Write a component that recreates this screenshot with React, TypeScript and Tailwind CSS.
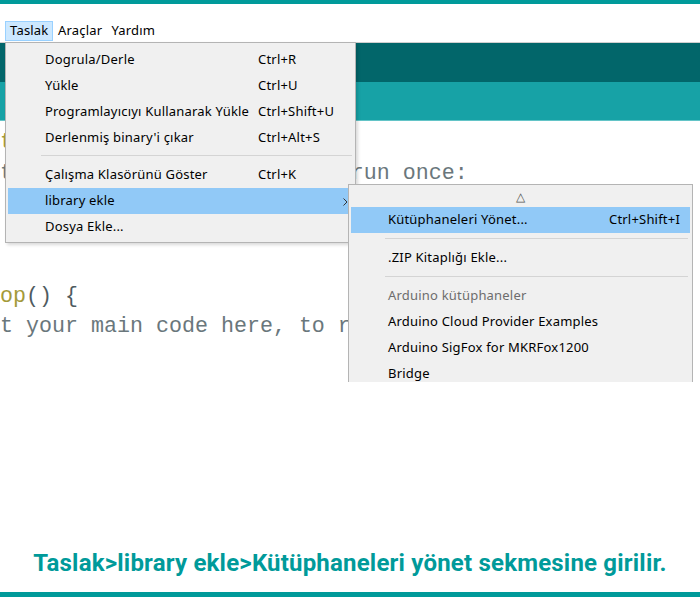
import React from 'react';

const uiFont = { fontFamily: '"Noto Sans", "Open Sans", sans-serif' };
const codeFont = { fontFamily: '"Liberation Mono", "Courier New", monospace' };

type Item =
  | { kind: 'item'; label: string; shortcut?: string; active?: boolean; submenu?: boolean; muted?: boolean }
  | { kind: 'sep' };

const mainItems: Item[] = [
  { kind: 'item', label: 'Dogrula/Derle', shortcut: 'Ctrl+R' },
  { kind: 'item', label: 'Yükle', shortcut: 'Ctrl+U' },
  { kind: 'item', label: 'Programlayıcıyı Kullanarak Yükle', shortcut: 'Ctrl+Shift+U' },
  { kind: 'item', label: "Derlenmiş binary'i çıkar", shortcut: 'Ctrl+Alt+S' },
  { kind: 'sep' },
  { kind: 'item', label: 'Çalışma Klasörünü Göster', shortcut: 'Ctrl+K' },
  { kind: 'item', label: 'library ekle', active: true, submenu: true },
  { kind: 'item', label: 'Dosya Ekle...' },
];

const subItems: Item[] = [
  { kind: 'item', label: 'Kütüphaneleri Yönet...', shortcut: 'Ctrl+Shift+I', active: true },
  { kind: 'sep' },
  { kind: 'item', label: '.ZIP Kitaplığı Ekle...' },
  { kind: 'sep' },
  { kind: 'item', label: 'Arduino kütüphaneler', muted: true },
  { kind: 'item', label: 'Arduino Cloud Provider Examples' },
  { kind: 'item', label: 'Arduino SigFox for MKRFox1200' },
  { kind: 'item', label: 'Bridge' },
];

function MainRow({ item }: { item: Item }) {
  if (item.kind === 'sep') {
    return (
      <div className="h-[11px] flex items-start pt-[4px]">
        <div className="h-px bg-[#d4d4d4] ml-[33px] mr-[1px] flex-1" />
      </div>
    );
  }
  return (
    <div className={`relative h-[26px] flex items-center pl-[37px] text-[13px] tracking-[0.2px] ${item.active ? 'bg-[#91c9f7]' : ''}`}>
      <span className="w-[213px] shrink-0 whitespace-nowrap text-black">{item.label}</span>
      {item.shortcut && <span className="whitespace-nowrap text-black">{item.shortcut}</span>}
      {item.submenu && (
        <svg className="absolute right-[5px] top-[10px]" width="5" height="8" viewBox="0 0 5 8">
          <path d="M0.5 0.5 L4 4 L0.5 7.5" fill="none" stroke="#333" strokeWidth="1" />
        </svg>
      )}
    </div>
  );
}

function SubRow({ item }: { item: Item }) {
  if (item.kind === 'sep') {
    return (
      <div className="h-[12px] flex items-start pt-[5px]">
        <div className="h-px bg-[#d4d4d4] ml-[34px] mr-[2px] flex-1" />
      </div>
    );
  }
  return (
    <div className={`h-[26px] flex items-center justify-between pl-[37px] pr-[10px] text-[13px] tracking-[0.2px] ${item.active ? 'bg-[#91c9f7]' : ''}`}>
      <span className={`whitespace-nowrap ${item.muted ? 'text-[#6d6d6d]' : 'text-black'}`}>{item.label}</span>
      {item.shortcut && <span className="whitespace-nowrap text-black">{item.shortcut}</span>}
    </div>
  );
}

export default function App() {
  return (
    <div className="w-[700px] h-[597px] bg-white flex flex-col overflow-hidden">
      <div className="h-[4px] bg-[#009a9a]" />

      {/* IDE screenshot */}
      <div className="relative h-[378px] overflow-hidden">
        <div className="h-[38px] flex items-end pb-[1px] pl-[5px] text-[13px] tracking-[0.2px] text-black" style={uiFont}>
          <div className="h-[20px] w-[48px] pl-[4px] flex items-center bg-[#cce8ff] border border-[#99d1ff]">Taslak</div>
          <div className="h-[20px] flex items-center ml-[5px]">Araçlar</div>
          <div className="h-[20px] flex items-center ml-[9px]">Yardım</div>
        </div>
        <div className="h-px bg-[#cfcfcf]" />
        <div className="h-[39px] bg-[#02666a]" />
        <div className="h-[39px] bg-[#17a2a6] border-b border-[#63c4c7]" />

        <div className="pt-[7px] overflow-hidden" style={codeFont}>
          <div className="-ml-[91px] text-[21.67px] leading-[30.7px] whitespace-pre text-[#4f5b60]">
            <div>
              <span className="text-[#5e6d03]">void</span> <span className="text-[#a49a3a]">setup</span>() {'{'}
            </div>
            <div className="text-[#6a777c]">  // put your setup code here, to run once:</div>
            <div>&nbsp;</div>
            <div>{'}'}</div>
            <div>&nbsp;</div>
            <div>
              <span className="text-[#5e6d03]">void</span> <span className="text-[#a49a3a]">loop</span>() {'{'}
            </div>
            <div className="text-[#6a777c]">  // put your main code here, to run repeatedly:</div>
          </div>
        </div>

        {/* Taslak menu */}
        <div
          className="absolute left-[5px] top-[38px] w-[351px] bg-[#f0f0f0] border border-[#b4b4b4] pt-[4px] pb-[2px] px-[2px] shadow-[2px_2px_3px_rgba(0,0,0,0.15)]"
          style={uiFont}
        >
          {mainItems.map((it, i) => (
            <MainRow key={i} item={it} />
          ))}
        </div>

        {/* library ekle submenu */}
        <div
          className="absolute left-[348px] top-[180px] w-[345px] bottom-0 bg-[#f0f0f0] border-l border-r border-t border-[#b4b4b4] pt-[2px] px-[2px] overflow-hidden"
          style={uiFont}
        >
          <div className="h-[20px] flex items-center justify-center text-[12px] text-[#555]">△</div>
          {subItems.map((it, i) => (
            <SubRow key={i} item={it} />
          ))}
        </div>
      </div>

      <div className="flex-1 flex items-end justify-center pb-[15px]">
        <div
          className="text-[24px] leading-[28px] font-bold text-[#009a9a] tracking-[0.2px] whitespace-nowrap"
          style={{ fontFamily: 'Roboto, "Open Sans", sans-serif' }}
        >
          Taslak&gt;library ekle&gt;Kütüphaneleri yönet sekmesine girilir.
        </div>
      </div>
      <div className="h-[5px] bg-[#009a9a]" />
    </div>
  );
}
